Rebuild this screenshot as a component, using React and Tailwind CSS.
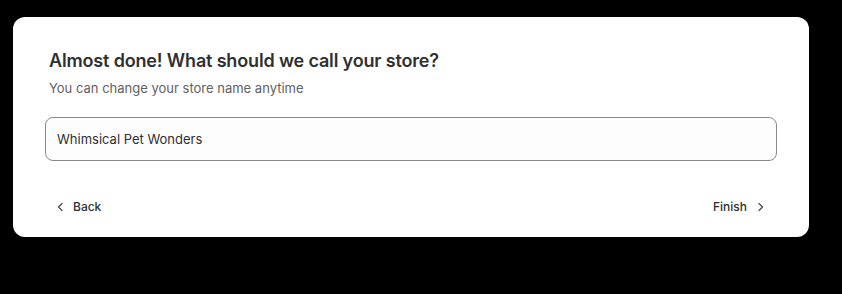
import React, { useState } from 'react'

const ChevronLeft = () => (
  <svg width="16" height="16" viewBox="0 0 16 16" fill="none" className="flex-shrink-0">
    <path d="M10 4.5L6.5 8l3.5 3.5" stroke="#4a4a4a" strokeWidth="1.3" strokeLinecap="round" strokeLinejoin="round" />
  </svg>
)

const ChevronRight = () => (
  <svg width="16" height="16" viewBox="0 0 16 16" fill="none" className="flex-shrink-0">
    <path d="M6 4.5L9.5 8 6 11.5" stroke="#4a4a4a" strokeWidth="1.3" strokeLinecap="round" strokeLinejoin="round" />
  </svg>
)

export default function App() {
  const [name, setName] = useState('Whimsical Pet Wonders')

  return (
    <div
      className="w-[842px] h-[294px] bg-black pt-[17px] pl-[13px]"
      style={{ fontFamily: 'Inter, "Noto Sans", sans-serif' }}
    >
      <div className="w-[796px] h-[220px] bg-white rounded-xl px-8 pt-[30px] pb-[14px] flex flex-col">
        {/* Heading */}
        <div className="pl-1">
          <h1 className="text-[18px] leading-7 font-semibold text-[#303030] tracking-[-0.16px]">
            Almost done! What should we call your store?
          </h1>
          <p className="mt-[3px] text-[13px] leading-5 text-[#616161]">
            You can change your store name anytime
          </p>
        </div>

        {/* Store name */}
        <input
          value={name}
          onChange={(e) => setName(e.target.value)}
          className="mt-[19px] h-[44px] w-full rounded-lg border border-[#8a8a8a] bg-[#fdfdfd] px-[11px] text-[13px] text-[#303030] outline-none"
        />

        {/* Footer */}
        <div className="mt-auto flex items-center justify-between h-8">
          <button className="flex items-center gap-[5px] pl-[7px] pr-2 h-8 text-[12px] font-medium text-[#303030] rounded-lg">
            <ChevronLeft /> Back
          </button>
          <button className="flex items-center gap-[6px] pl-2 pr-2 h-8 text-[12px] font-medium text-[#303030] rounded-lg">
            Finish <ChevronRight />
          </button>
        </div>
      </div>
    </div>
  )
}
